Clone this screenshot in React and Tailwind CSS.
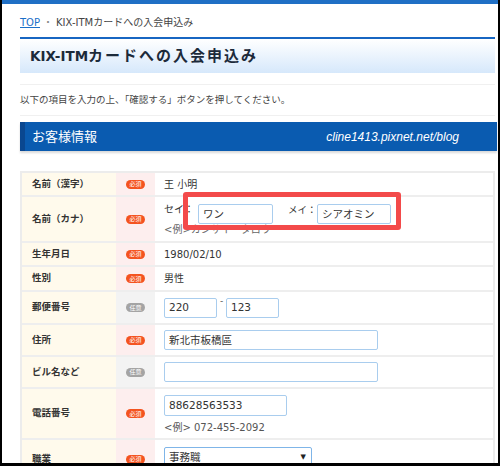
import React from 'react';

const ff = "font-['DejaVu_Sans','Noto_Sans_CJK_JP',sans-serif]";

function Badge({ req }) {
  return (
    <span
      className={`w-[19px] h-[9px] rounded-full flex items-center justify-center text-white text-[6px] leading-none ${
        req ? 'bg-[#f4531f]' : 'bg-[#a4a4a4]'
      }`}
    >
      {req ? '必須' : '任意'}
    </span>
  );
}

function Row({ label, req = true, h, valueClass = '', children }) {
  return (
    <div className={`flex border-b-2 border-[#eeeeee] ${h}`}>
      <div className="w-[94px] shrink-0 bg-[#fffaec] flex items-center pl-[10px] text-[9.5px] font-bold text-[#333] whitespace-nowrap">
        {label}
      </div>
      <div
        className={`w-[39px] shrink-0 flex items-center justify-center ${
          req ? 'bg-[#fdeeee]' : 'bg-[#f3f3f3]'
        }`}
      >
        <Badge req={req} />
      </div>
      <div className={`flex-1 pl-[9px] text-[10px] text-[#333] ${valueClass}`}>{children}</div>
    </div>
  );
}

function Field({ w, h = 'h-[20px]', children }) {
  return (
    <div
      className={`${w} ${h} shrink-0 border border-[#a9cdee] rounded-[2px] bg-white flex items-center pl-[4px] text-[10.5px] text-[#333] leading-none`}
    >
      {children}
    </div>
  );
}

export default function App() {
  return (
    <div className={`relative w-[502px] h-[466px] bg-white overflow-hidden ${ff}`}>
      <div className="w-[500px] h-[466px] border-l-2 border-r-2 border-b-[3px] border-black flex flex-col overflow-hidden">
        <div className="h-[4px] shrink-0 bg-[#1f6fc5]" />

        <div className="pl-[18px] pr-[1px] flex flex-col">
          {/* breadcrumb */}
          <div className="h-[33px] pt-[3px] flex items-center text-[10px] text-[#444]">
            <a href="#" className="text-[#1a6fc8] underline">TOP</a>
            <span className="mx-[3px] text-[#888]">・</span>
            <span>KIX-ITMカードへの入会申込み</span>
          </div>

          {/* page title */}
          <div className="w-[475px] h-[36px] border-t-2 border-[#1766c2] bg-linear-to-b from-white to-[#d6e8fb] flex items-center pl-[10px] font-bold text-[#1c2a3a]">
            <span className="text-[13.5px]">KIX-ITM</span>
            <span className="text-[15px] tracking-[2px]">カードへの入会申込み</span>
          </div>

          {/* intro */}
          <div className="mt-[11px] w-[475px] h-[32px] border-y border-[#f0f0f0] flex items-center text-[9.5px] text-[#444]">
            以下の項目を入力の上、「確認する」ボタンを押してください。
          </div>

          {/* section header */}
          <div className="mt-[6px] w-[477px] h-[29px] bg-[#0a5bb0] border-l-[5px] border-[#0a4790] shadow-[0_2px_2px_rgba(0,0,0,0.15)] flex items-center justify-between pl-[7px] pr-[38px]">
            <span className="text-[13px] text-white">お客様情報</span>
            <span className="font-['Liberation_Sans',sans-serif] italic text-[12px] text-white">
              cline1413.pixnet.net/blog
            </span>
          </div>

          {/* form table */}
          <div className="mt-[20px] w-[475px] border-2 border-b-0 border-[#ececec] flex flex-col">
            <Row label="名前（漢字）" h="h-[24px]" valueClass="flex items-center">
              王 小明
            </Row>

            <Row label="名前（カナ）" h="h-[46px]" valueClass="pt-[7px] flex flex-col">
              <div className="flex items-start">
                <span className="w-[34px] shrink-0 leading-[12px] whitespace-nowrap">セイ：</span>
                <Field w="w-[75px]">ワン</Field>
                <span className="ml-[15px] w-[29px] shrink-0 leading-[12px] whitespace-nowrap text-[9.5px]">メイ：</span>
                <Field w="w-[74px]">シアオミン</Field>
              </div>
              <div className="leading-[12px] text-[#666]">&lt;例&gt;カンサイ　タロウ</div>
            </Row>

            <Row label="生年月日" h="h-[24px]" valueClass="flex items-center">
              1980/02/10
            </Row>

            <Row label="性別" h="h-[25px]" valueClass="flex items-center">
              男性
            </Row>

            <Row label="郵便番号" req={false} h="h-[33px]" valueClass="flex items-center">
              <Field w="w-[53px]">220</Field>
              <span className="w-[9px] self-start mt-[5px] text-center leading-none text-[9px] text-[#555]">-</span>
              <Field w="w-[53px]">123</Field>
            </Row>

            <Row label="住所" h="h-[32px]" valueClass="flex items-center">
              <Field w="w-[214px]">新北市板橋區</Field>
            </Row>

            <Row label="ビル名など" req={false} h="h-[32px]" valueClass="flex items-center">
              <Field w="w-[214px]" />
            </Row>

            <Row label="電話番号" h="h-[51px]" valueClass="pt-[6px] flex flex-col">
              <Field w="w-[123px]" h="h-[21px]">88628563533</Field>
              <div className="mt-[6px] leading-[12px] text-[#555]">&lt;例&gt; 072-455-2092</div>
            </Row>

            <Row label="職業" h="h-[40px]" valueClass="pt-[7px]">
              <div className="w-[148px] h-[21px] border border-[#7fb5e8] rounded-[2px] bg-white flex items-center justify-between pl-[4px] pr-[5px] text-[10.5px] text-[#333]">
                <span>事務職</span>
                <span className="text-[7px] text-[#222]">▼</span>
              </div>
            </Row>
          </div>
        </div>
      </div>

      {/* red annotation */}
      <div className="absolute left-[183px] top-[192px] w-[218px] h-[38px] border-[5px] border-[#f34a4a] rounded-[3px]" />
    </div>
  );
}
